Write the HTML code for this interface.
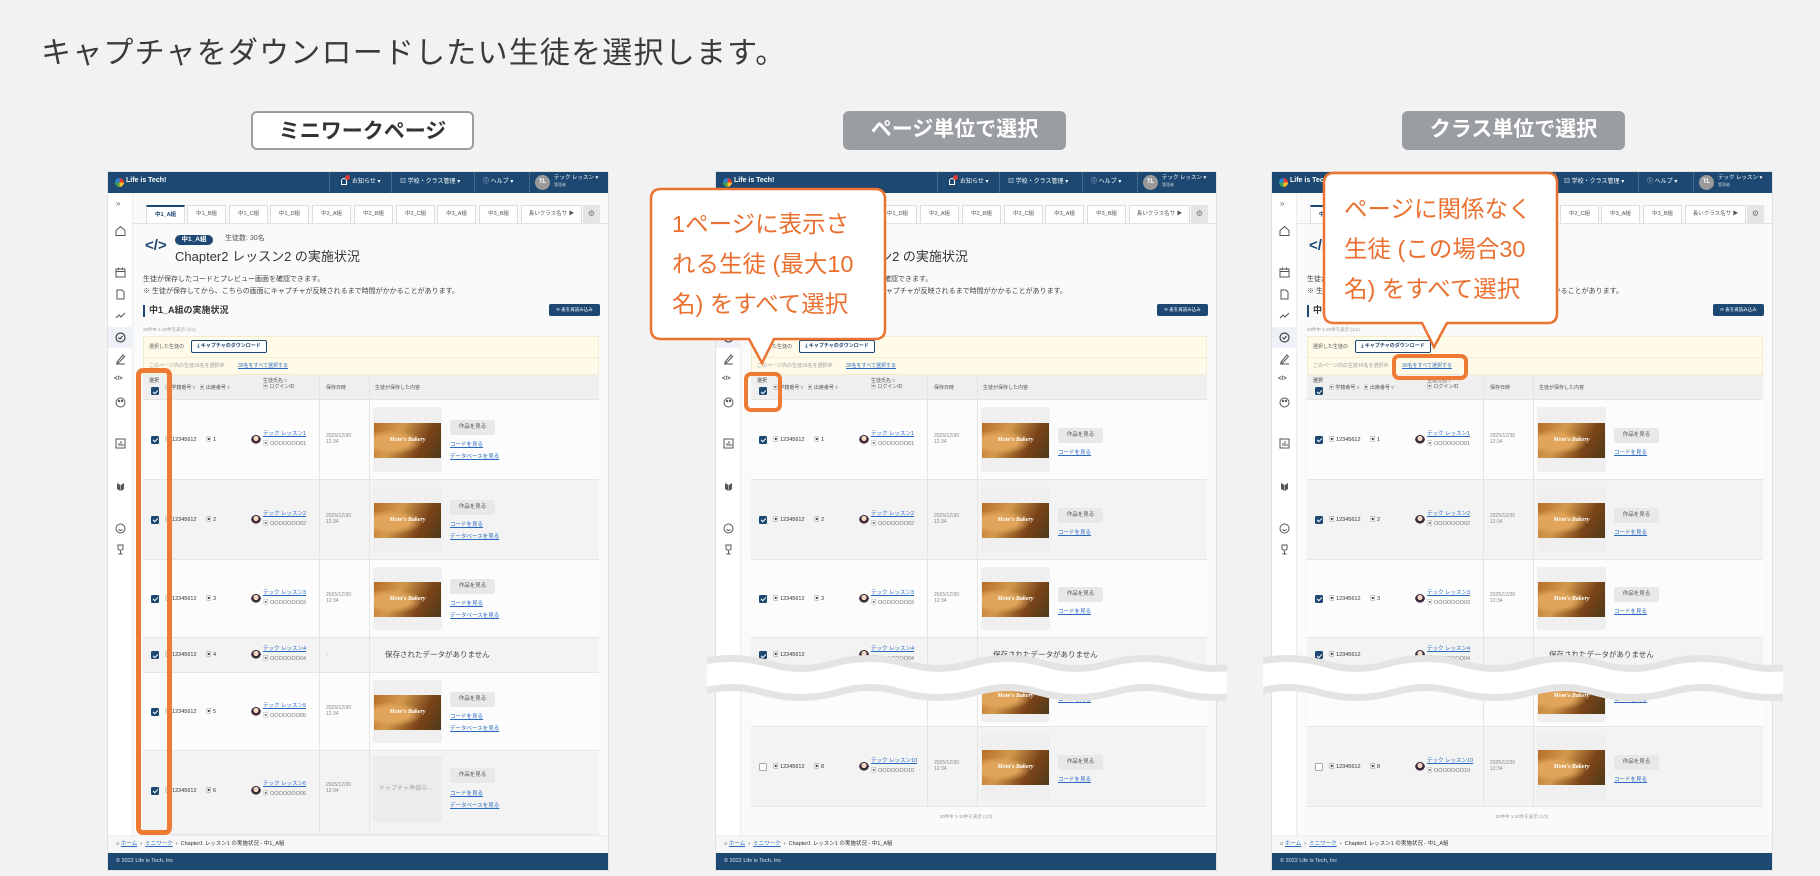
<!DOCTYPE html>
<html><head><meta charset="utf-8">
<style>
*{box-sizing:border-box}
body{margin:0;width:1820px;height:876px;background:#f2f2f2;position:relative;overflow:hidden;font-family:"Liberation Sans","Noto Sans CJK JP",sans-serif;color:#333}
.a{position:absolute}
.t{position:absolute;white-space:nowrap;line-height:1.2}
.p{position:absolute;top:172px;width:500px;height:698px;background:#fafafa;overflow:hidden;box-shadow:0 0 0 1px #e2e2e2}
.hdr{position:absolute;left:0;top:0;width:500px;height:21px;background:#1c4872;color:#fff;font-size:6px}
.hdr .dv{position:absolute;top:0;width:1px;height:21px;background:rgba(255,255,255,.18)}
.side{position:absolute;left:0;top:21px;width:25px;height:642px;background:#fff;border-right:1px solid #ececec}
.side svg{position:absolute;left:6px}
.tab{position:absolute;top:33px;width:39px;height:18px;background:#fff;border:1px solid #ddd;border-bottom:none;font-size:5.5px;color:#555;text-align:center;line-height:17px}
.tab.on{border-top:2px solid #1c4872;color:#1c4872;font-weight:bold}
.s5{font-size:5.5px}
.g{color:#777}
.lk{color:#2a6bc2;text-decoration:underline}
.row{position:absolute;left:35px;width:456px;border-bottom:1px solid #e6e6e6;overflow:hidden}
.cb{position:absolute;left:8px;top:50%;margin-top:-4px;width:8px;height:8px;border-radius:1.5px;border:1px solid #aaa;background:#fff}
.cb.on{background:#1c4872;border-color:#1c4872}
.cb.on:after{content:"";position:absolute;left:2px;top:0.5px;width:2px;height:4px;border:solid #fff;border-width:0 1px 1px 0;transform:rotate(45deg)}
.av{position:absolute;left:108px;top:50%;margin-top:-5px;width:10px;height:10px;border-radius:50%;background:radial-gradient(circle at 50% 35%,#f4d9c4 0 30%,#3a2a3a 32% 60%,#eee 62%)}
.c1{top:50%;margin-top:-3px}
.nm{top:50%;margin-top:-9px}
.lg{top:50%;margin-top:1px}
.dt{top:50%;margin-top:-7px;left:183px;font-size:5px;color:#888}
.th{position:absolute;left:230px;top:7px;bottom:7px;width:69px;background:#efefef;border-radius:3px}
.img{position:absolute;left:1px;right:1px;top:50%;margin-top:-17px;height:35px;background:radial-gradient(ellipse at 25% 55%,#e0a45a 0 25%,transparent 45%),linear-gradient(120deg,#b66d2a,#d39a4c 35%,#7a4418 70%,#4e3a1a);color:#fff;font-family:"Liberation Serif",serif;font-style:italic;font-weight:bold;font-size:6px;text-align:center;line-height:35px}
.btn{position:absolute;left:307px;top:50%;width:45px;height:15px;background:#e8e8e8;border-radius:2px;font-size:5.5px;color:#555;text-align:center;line-height:15px}
.b1{margin-top:-20px}.b2{margin-top:-12px}
.l1{top:50%;margin-top:2px;left:307px}.l2{top:50%;margin-top:14px;left:307px}
.l3{top:50%;margin-top:10px;left:307px}
.vl{position:absolute;width:1px;background:#e4e4e4}
.lab{position:absolute;top:111px;width:223px;height:39px;border-radius:6px;font-size:21px;font-weight:bold;text-align:center;line-height:38px}
.orange{position:absolute;border:5px solid #ef7a34;border-radius:7px}
.ct{position:absolute;color:#ea7030;font-size:23.5px;line-height:40px;white-space:nowrap}
.desc{font-size:7px;color:#444}
</style></head><body>

<div class="t" style="left:41px;top:36px;font-size:30px;color:#3a3a3a;letter-spacing:1.2px">キャプチャをダウンロードしたい生徒を選択します。</div>

<div class="lab" style="left:251px;background:#fff;border:2px solid #9a9da2;color:#333">ミニワークページ</div>
<div class="lab" style="left:843px;background:#9a9da2;color:#fff">ページ単位で選択</div>
<div class="lab" style="left:1402px;background:#9a9da2;color:#fff">クラス単位で選択</div>

<!-- ===================== PANEL 1 ===================== -->
<div class="p" style="left:108px">
 <div class="hdr">
  <div class="a" style="left:7px;top:6px;width:9px;height:9px;border-radius:50%;background:conic-gradient(#e53935 0 25%,#fbc02d 0 50%,#43a047 0 75%,#1e88e5 0)"></div>
  <div class="t" style="left:18px;top:5px;font-size:7px;font-weight:bold">Life is Tech!</div>
  <div class="dv" style="left:221px"></div><div class="dv" style="left:283px"></div><div class="dv" style="left:366px"></div><div class="dv" style="left:421px"></div>
  <div class="a" style="left:233px;top:6px;width:6px;height:7px;border:1px solid #fff;border-radius:3px 3px 0 0"></div>
  <div class="a" style="left:237px;top:3px;width:5px;height:5px;border-radius:50%;background:#e53935"></div>
  <div class="t" style="left:244px;top:7px">お知らせ ▾</div>
  <div class="t" style="left:292px;top:7px">▥ 学校・クラス管理 ▾</div>
  <div class="t" style="left:375px;top:7px">ⓘ ヘルプ ▾</div>
  <div class="a" style="left:427px;top:3px;width:15px;height:15px;border-radius:50%;background:#9a9a9a;font-size:6px;text-align:center;line-height:15px;font-weight:bold">TL</div>
  <div class="t" style="left:446px;top:3px;font-size:5.5px">テック レッスン ▾</div>
  <div class="t" style="left:446px;top:11px;font-size:4px;color:#bcc">管理者</div>
 </div>
 <div class="side">
  <div class="t" style="left:8px;top:6px;font-size:8px;color:#666">»</div>
  <div class="a" style="left:0;top:134px;width:25px;height:21px;background:#eef1f5"></div>
  <svg style="top:31px" width="13" height="13" viewBox="0 0 13 13" fill="none" stroke="#555" stroke-width="1"><path d="M2 6.5L6.5 2.5 11 6.5V11.5H2Z"/></svg>
  <svg style="top:73px" width="13" height="13" viewBox="0 0 13 13" fill="none" stroke="#555" stroke-width="1"><rect x="2" y="3" width="9" height="8"/><path d="M2 5.5H11M4.5 1.5V4M8.5 1.5V4"/></svg>
  <svg style="top:95px" width="13" height="13" viewBox="0 0 13 13" fill="none" stroke="#555" stroke-width="1"><path d="M3 2H8L10 4V11H3Z"/></svg>
  <svg style="top:116px" width="13" height="13" viewBox="0 0 13 13" fill="none" stroke="#555" stroke-width="1"><path d="M2 9L5 6 7 8 11 4"/></svg>
  <svg style="top:138px" width="13" height="13" viewBox="0 0 13 13" fill="none" stroke="#444" stroke-width="1.2"><circle cx="6.5" cy="6.5" r="4.5"/><path d="M4.5 6.5L6 8 8.5 5"/></svg>
  <svg style="top:159px" width="13" height="13" viewBox="0 0 13 13" fill="none" stroke="#555" stroke-width="1"><path d="M3 10L9 3 10.5 4.5 4.5 11H3ZM2 12H11"/></svg>
  <div class="t" style="left:6px;top:183px;font-size:6px;font-weight:bold;color:#444">&lt;/&gt;</div>
  <svg style="top:203px" width="13" height="13" viewBox="0 0 13 13" fill="none" stroke="#555" stroke-width="1"><circle cx="6.5" cy="6.5" r="4.5"/><circle cx="5" cy="5" r=".7"/><circle cx="8" cy="5" r=".7"/></svg>
  <svg style="top:244px" width="13" height="13" viewBox="0 0 13 13" fill="none" stroke="#555" stroke-width="1"><rect x="2" y="2" width="9" height="9"/><path d="M5 9V6M7 9V4M9 9V7"/></svg>
  <svg style="top:287px" width="13" height="13" viewBox="0 0 13 13" fill="#555"><path d="M3 3L6.5 5V11L3 9ZM10 3L7 5V11L10 9Z"/></svg>
  <svg style="top:329px" width="13" height="13" viewBox="0 0 13 13" fill="none" stroke="#555" stroke-width="1"><circle cx="6.5" cy="6.5" r="4.5"/><path d="M4.5 7.5Q6.5 9.5 8.5 7.5"/></svg>
  <svg style="top:350px" width="13" height="13" viewBox="0 0 13 13" fill="none" stroke="#555" stroke-width="1"><path d="M4 2H9V6Q6.5 8.5 4 6ZM6.5 8V10.5M4.5 11H8.5"/></svg>
 </div>
 <div class="a" style="left:25px;top:51px;width:475px;height:1px;background:#e4e4e4"></div>
 <div class="tab on" style="left:38px">中1_A組</div><div class="tab" style="left:79px">中1_B組</div><div class="tab" style="left:121px">中1_C組</div><div class="tab" style="left:162px">中1_D組</div><div class="tab" style="left:204px">中2_A組</div><div class="tab" style="left:246px">中2_B組</div><div class="tab" style="left:288px">中2_C組</div><div class="tab" style="left:329px">中3_A組</div><div class="tab" style="left:371px">中3_B組</div><div class="tab" style="left:413px;width:61px">長いクラス名サ ▶</div>
 <div class="a" style="left:475px;top:33px;width:17px;height:18px;background:#e5e5e5;font-size:8px;color:#777;text-align:center;line-height:18px">⚙</div>
 <div class="t" style="left:37px;top:65px;font-size:15px;font-weight:bold;color:#1c4872">&lt;/&gt;</div>
 <div class="a" style="left:67px;top:63px;width:38px;height:10px;border-radius:5px;background:#1c4872;color:#fff;font-size:6.5px;text-align:center;line-height:10px;font-weight:bold">中1_A組</div>
 <div class="t" style="left:117px;top:63px;font-size:7px;color:#555">生徒数: 30名</div>
 <div class="t" style="left:67px;top:77px;font-size:13px;color:#333">Chapter2 レッスン2 の実施状況</div>
 <div class="t desc" style="left:35px;top:104px">生徒が保存したコードとプレビュー画面を確認できます。</div>
 <div class="t desc" style="left:35px;top:116px">※ 生徒が保存してから、こちらの画面にキャプチャが反映されるまで時間がかかることがあります。</div>
 <div class="a" style="left:35px;top:133px;width:2px;height:12px;background:#1c4872"></div>
 <div class="t" style="left:41px;top:133px;font-size:9px;font-weight:bold">中1_A組の実施状況</div>
 <div class="a" style="left:441px;top:132px;width:51px;height:12px;background:#1c4872;border-radius:2px;color:#fff;font-size:4.5px;text-align:center;line-height:12px">⟳ 表を再読み込み</div>
 <div class="t" style="left:35px;top:155px;font-size:4.5px;color:#999">20件中 1-20件を表示 (1/1)</div>
 <div class="a" style="left:35px;top:164px;width:456px;height:39px;background:#fffbe8;border:1px solid #f2ecd2"></div>
 <div class="a" style="left:35px;top:185px;width:456px;height:1px;background:#f2ecd2"></div>
 <div class="t" style="left:41px;top:172px;font-size:5px;color:#555">選択した生徒の</div>
 <div class="a" style="left:83px;top:168px;width:76px;height:13px;background:#fff;border:1px solid #1c4872;border-radius:2px;font-size:5px;font-weight:bold;color:#1c4872;text-align:center;line-height:11px">⤓ キャプチャのダウンロード</div>
 <div class="t" style="left:41px;top:191px;font-size:5px;color:#999">このページ内の生徒10名を選択中</div>
 <div class="t lk" style="left:130px;top:191px;font-size:5px">30名をすべて選択する</div>
 <div class="a" style="left:35px;top:203px;width:456px;height:25px;background:#efefef;border-bottom:1px solid #e4e4e4"></div>
 <div class="t" style="left:41px;top:206px;font-size:5px">選択</div>
 <i class="cb on" style="left:43px;top:215px;margin:0"></i>
 <div class="t" style="left:57px;top:213px;font-size:5px;color:#555">▣ 学籍番号 ▿ &nbsp;&nbsp;▣ 出席番号 ▿</div>
 <div class="t" style="left:155px;top:206px;font-size:5px;color:#555">生徒氏名 ▿<br>▣ ログインID</div>
 <div class="t" style="left:218px;top:213px;font-size:5px;color:#555">保存日時</div>
 <div class="t" style="left:267px;top:213px;font-size:5px;color:#555">生徒が保存した内容</div>

 <div class="row" style="top:228px;height:80px;background:#fcfcfc"><i class="cb on"></i><span class="t s5 c1" style="left:22px">▣ 12345612</span><span class="t s5 c1" style="left:63px">▣ 1</span><i class="av"></i><span class="t s5 lk nm" style="left:120px">テック レッスン1</span><span class="t s5 g lg" style="left:120px">▣ OOOOOOO01</span><span class="t dt">2025/12/30<br>12:34</span><div class="th"><div class="img">Mom's Bakery</div></div><span class="btn b1">作品を見る</span><span class="t s5 lk l1">コードを見る</span><span class="t s5 lk l2">データベースを見る</span></div>
 <div class="row" style="top:308px;height:80px;background:#f3f3f3"><i class="cb on"></i><span class="t s5 c1" style="left:22px">▣ 12345612</span><span class="t s5 c1" style="left:63px">▣ 2</span><i class="av"></i><span class="t s5 lk nm" style="left:120px">テック レッスン2</span><span class="t s5 g lg" style="left:120px">▣ OOOOOOO02</span><span class="t dt">2025/12/30<br>12:34</span><div class="th"><div class="img">Mom's Bakery</div></div><span class="btn b1">作品を見る</span><span class="t s5 lk l1">コードを見る</span><span class="t s5 lk l2">データベースを見る</span></div>
 <div class="row" style="top:388px;height:78px;background:#fcfcfc"><i class="cb on"></i><span class="t s5 c1" style="left:22px">▣ 12345612</span><span class="t s5 c1" style="left:63px">▣ 3</span><i class="av"></i><span class="t s5 lk nm" style="left:120px">テック レッスン3</span><span class="t s5 g lg" style="left:120px">▣ OOOOOOO03</span><span class="t dt">2025/12/30<br>12:34</span><div class="th"><div class="img">Mom's Bakery</div></div><span class="btn b1">作品を見る</span><span class="t s5 lk l1">コードを見る</span><span class="t s5 lk l2">データベースを見る</span></div>
 <div class="row" style="top:466px;height:35px;background:#f3f3f3"><i class="cb on"></i><span class="t s5 c1" style="left:22px">▣ 12345612</span><span class="t s5 c1" style="left:63px">▣ 4</span><i class="av"></i><span class="t s5 lk nm" style="left:120px">テック レッスン4</span><span class="t s5 g lg" style="left:120px">▣ OOOOOOO04</span><span class="t s5 g c1" style="left:183px">-</span><span class="t c1" style="left:242px;font-size:7.5px;margin-top:-5px;color:#444">保存されたデータがありません</span></div>
 <div class="row" style="top:501px;height:78px;background:#fcfcfc"><i class="cb on"></i><span class="t s5 c1" style="left:22px">▣ 12345612</span><span class="t s5 c1" style="left:63px">▣ 5</span><i class="av"></i><span class="t s5 lk nm" style="left:120px">テック レッスン5</span><span class="t s5 g lg" style="left:120px">▣ OOOOOOO05</span><span class="t dt">2025/12/30<br>12:34</span><div class="th"><div class="img">Mom's Bakery</div></div><span class="btn b1">作品を見る</span><span class="t s5 lk l1">コードを見る</span><span class="t s5 lk l2">データベースを見る</span></div>
 <div class="row" style="top:579px;height:84px;background:#f3f3f3"><i class="cb on" style="margin-top:-6px"></i><span class="t s5" style="left:22px;top:37px">▣ 12345612</span><span class="t s5" style="left:63px;top:37px">▣ 6</span><i class="av" style="margin-top:-7px"></i><span class="t s5 lk" style="left:120px;top:30px">テック レッスン6</span><span class="t s5 g" style="left:120px;top:40px">▣ OOOOOOO06</span><span class="t" style="left:183px;top:31px;font-size:5px;color:#888">2025/12/30<br>12:34</span><div class="th" style="top:5px;bottom:12px;background:#ececec"><span class="t" style="left:6px;top:30px;font-size:6px;color:#aaa">キャプチャ準備中...</span></div><span class="btn" style="top:17px">作品を見る</span><span class="t s5 lk" style="left:307px;top:40px">コードを見る</span><span class="t s5 lk" style="left:307px;top:52px">データベースを見る</span></div>
 <div class="vl" style="left:211px;top:203px;height:460px"></div>
 <div class="vl" style="left:261px;top:203px;height:460px"></div>
 <div class="a" style="left:0;top:663px;width:500px;height:18px;background:#f7f7f7;border-top:1px solid #eee"></div>
 <div class="t" style="left:8px;top:669px;font-size:5.5px;color:#333">⌂ <span class="lk">ホーム</span> &nbsp;›&nbsp; <span class="lk">ミニワーク</span> &nbsp;›&nbsp; Chapter1 レッスン1 の実施状況 - 中1_A組</div>
 <div class="a" style="left:0;top:681px;width:500px;height:17px;background:#1c4872"></div>
 <div class="t" style="left:8px;top:686px;font-size:5.5px;color:#dfe6ee">© 2022 Life is Tech, Inc</div>
</div>

<!-- ===================== PANEL 2 ===================== -->
<div class="p" style="left:716px">
 <div class="hdr">
  <div class="a" style="left:7px;top:6px;width:9px;height:9px;border-radius:50%;background:conic-gradient(#e53935 0 25%,#fbc02d 0 50%,#43a047 0 75%,#1e88e5 0)"></div>
  <div class="t" style="left:18px;top:5px;font-size:7px;font-weight:bold">Life is Tech!</div>
  <div class="dv" style="left:221px"></div><div class="dv" style="left:283px"></div><div class="dv" style="left:366px"></div><div class="dv" style="left:421px"></div>
  <div class="a" style="left:233px;top:6px;width:6px;height:7px;border:1px solid #fff;border-radius:3px 3px 0 0"></div>
  <div class="a" style="left:237px;top:3px;width:5px;height:5px;border-radius:50%;background:#e53935"></div>
  <div class="t" style="left:244px;top:7px">お知らせ ▾</div>
  <div class="t" style="left:292px;top:7px">▥ 学校・クラス管理 ▾</div>
  <div class="t" style="left:375px;top:7px">ⓘ ヘルプ ▾</div>
  <div class="a" style="left:427px;top:3px;width:15px;height:15px;border-radius:50%;background:#9a9a9a;font-size:6px;text-align:center;line-height:15px;font-weight:bold">TL</div>
  <div class="t" style="left:446px;top:3px;font-size:5.5px">テック レッスン ▾</div>
  <div class="t" style="left:446px;top:11px;font-size:4px;color:#bcc">管理者</div>
 </div>
 <div class="side">
  <div class="t" style="left:8px;top:6px;font-size:8px;color:#666">»</div>
  <div class="a" style="left:0;top:134px;width:25px;height:21px;background:#eef1f5"></div>
  <svg style="top:31px" width="13" height="13" viewBox="0 0 13 13" fill="none" stroke="#555" stroke-width="1"><path d="M2 6.5L6.5 2.5 11 6.5V11.5H2Z"/></svg>
  <svg style="top:73px" width="13" height="13" viewBox="0 0 13 13" fill="none" stroke="#555" stroke-width="1"><rect x="2" y="3" width="9" height="8"/><path d="M2 5.5H11M4.5 1.5V4M8.5 1.5V4"/></svg>
  <svg style="top:95px" width="13" height="13" viewBox="0 0 13 13" fill="none" stroke="#555" stroke-width="1"><path d="M3 2H8L10 4V11H3Z"/></svg>
  <svg style="top:116px" width="13" height="13" viewBox="0 0 13 13" fill="none" stroke="#555" stroke-width="1"><path d="M2 9L5 6 7 8 11 4"/></svg>
  <svg style="top:138px" width="13" height="13" viewBox="0 0 13 13" fill="none" stroke="#444" stroke-width="1.2"><circle cx="6.5" cy="6.5" r="4.5"/><path d="M4.5 6.5L6 8 8.5 5"/></svg>
  <svg style="top:159px" width="13" height="13" viewBox="0 0 13 13" fill="none" stroke="#555" stroke-width="1"><path d="M3 10L9 3 10.5 4.5 4.5 11H3ZM2 12H11"/></svg>
  <div class="t" style="left:6px;top:183px;font-size:6px;font-weight:bold;color:#444">&lt;/&gt;</div>
  <svg style="top:203px" width="13" height="13" viewBox="0 0 13 13" fill="none" stroke="#555" stroke-width="1"><circle cx="6.5" cy="6.5" r="4.5"/><circle cx="5" cy="5" r=".7"/><circle cx="8" cy="5" r=".7"/></svg>
  <svg style="top:244px" width="13" height="13" viewBox="0 0 13 13" fill="none" stroke="#555" stroke-width="1"><rect x="2" y="2" width="9" height="9"/><path d="M5 9V6M7 9V4M9 9V7"/></svg>
  <svg style="top:287px" width="13" height="13" viewBox="0 0 13 13" fill="#555"><path d="M3 3L6.5 5V11L3 9ZM10 3L7 5V11L10 9Z"/></svg>
  <svg style="top:329px" width="13" height="13" viewBox="0 0 13 13" fill="none" stroke="#555" stroke-width="1"><circle cx="6.5" cy="6.5" r="4.5"/><path d="M4.5 7.5Q6.5 9.5 8.5 7.5"/></svg>
  <svg style="top:350px" width="13" height="13" viewBox="0 0 13 13" fill="none" stroke="#555" stroke-width="1"><path d="M4 2H9V6Q6.5 8.5 4 6ZM6.5 8V10.5M4.5 11H8.5"/></svg>
 </div>
 <div class="a" style="left:25px;top:51px;width:475px;height:1px;background:#e4e4e4"></div>
 <div class="tab on" style="left:38px">中1_A組</div><div class="tab" style="left:79px">中1_B組</div><div class="tab" style="left:121px">中1_C組</div><div class="tab" style="left:162px">中1_D組</div><div class="tab" style="left:204px">中2_A組</div><div class="tab" style="left:246px">中2_B組</div><div class="tab" style="left:288px">中2_C組</div><div class="tab" style="left:329px">中3_A組</div><div class="tab" style="left:371px">中3_B組</div><div class="tab" style="left:413px;width:61px">長いクラス名サ ▶</div>
 <div class="a" style="left:475px;top:33px;width:17px;height:18px;background:#e5e5e5;font-size:8px;color:#777;text-align:center;line-height:18px">⚙</div>
 <div class="t" style="left:37px;top:65px;font-size:15px;font-weight:bold;color:#1c4872">&lt;/&gt;</div>
 <div class="a" style="left:67px;top:63px;width:38px;height:10px;border-radius:5px;background:#1c4872;color:#fff;font-size:6.5px;text-align:center;line-height:10px;font-weight:bold">中1_A組</div>
 <div class="t" style="left:117px;top:63px;font-size:7px;color:#555">生徒数: 30名</div>
 <div class="t" style="left:67px;top:77px;font-size:13px;color:#333">Chapter2 レッスン2 の実施状況</div>
 <div class="t desc" style="left:35px;top:104px">生徒が保存したコードとプレビュー画面を確認できます。</div>
 <div class="t desc" style="left:35px;top:116px">※ 生徒が保存してから、こちらの画面にキャプチャが反映されるまで時間がかかることがあります。</div>
 <div class="a" style="left:35px;top:133px;width:2px;height:12px;background:#1c4872"></div>
 <div class="t" style="left:41px;top:133px;font-size:9px;font-weight:bold">中1_A組の実施状況</div>
 <div class="a" style="left:441px;top:132px;width:51px;height:12px;background:#1c4872;border-radius:2px;color:#fff;font-size:4.5px;text-align:center;line-height:12px">⟳ 表を再読み込み</div>
 <div class="t" style="left:35px;top:155px;font-size:4.5px;color:#999">20件中 1-20件を表示 (1/1)</div>
 <div class="a" style="left:35px;top:164px;width:456px;height:39px;background:#fffbe8;border:1px solid #f2ecd2"></div>
 <div class="a" style="left:35px;top:185px;width:456px;height:1px;background:#f2ecd2"></div>
 <div class="t" style="left:41px;top:172px;font-size:5px;color:#555">選択した生徒の</div>
 <div class="a" style="left:83px;top:168px;width:76px;height:13px;background:#fff;border:1px solid #1c4872;border-radius:2px;font-size:5px;font-weight:bold;color:#1c4872;text-align:center;line-height:11px">⤓ キャプチャのダウンロード</div>
 <div class="t" style="left:41px;top:191px;font-size:5px;color:#999">このページ内の生徒10名を選択中</div>
 <div class="t lk" style="left:130px;top:191px;font-size:5px">30名をすべて選択する</div>
 <div class="a" style="left:35px;top:203px;width:456px;height:25px;background:#efefef;border-bottom:1px solid #e4e4e4"></div>
 <div class="t" style="left:41px;top:206px;font-size:5px">選択</div>
 <i class="cb on" style="left:43px;top:215px;margin:0"></i>
 <div class="t" style="left:57px;top:213px;font-size:5px;color:#555">▣ 学籍番号 ▿ &nbsp;&nbsp;▣ 出席番号 ▿</div>
 <div class="t" style="left:155px;top:206px;font-size:5px;color:#555">生徒氏名 ▿<br>▣ ログインID</div>
 <div class="t" style="left:218px;top:213px;font-size:5px;color:#555">保存日時</div>
 <div class="t" style="left:267px;top:213px;font-size:5px;color:#555">生徒が保存した内容</div>

 <div class="row" style="top:228px;height:80px;background:#fcfcfc"><i class="cb on"></i><span class="t s5 c1" style="left:22px">▣ 12345612</span><span class="t s5 c1" style="left:63px">▣ 1</span><i class="av"></i><span class="t s5 lk nm" style="left:120px">テック レッスン1</span><span class="t s5 g lg" style="left:120px">▣ OOOOOOO01</span><span class="t dt">2025/12/30<br>12:34</span><div class="th"><div class="img">Mom's Bakery</div></div><span class="btn b2">作品を見る</span><span class="t s5 lk l3">コードを見る</span></div>
 <div class="row" style="top:308px;height:80px;background:#f3f3f3"><i class="cb on"></i><span class="t s5 c1" style="left:22px">▣ 12345612</span><span class="t s5 c1" style="left:63px">▣ 2</span><i class="av"></i><span class="t s5 lk nm" style="left:120px">テック レッスン2</span><span class="t s5 g lg" style="left:120px">▣ OOOOOOO02</span><span class="t dt">2025/12/30<br>12:34</span><div class="th"><div class="img">Mom's Bakery</div></div><span class="btn b2">作品を見る</span><span class="t s5 lk l3">コードを見る</span></div>
 <div class="row" style="top:388px;height:78px;background:#fcfcfc"><i class="cb on"></i><span class="t s5 c1" style="left:22px">▣ 12345612</span><span class="t s5 c1" style="left:63px">▣ 3</span><i class="av"></i><span class="t s5 lk nm" style="left:120px">テック レッスン3</span><span class="t s5 g lg" style="left:120px">▣ OOOOOOO03</span><span class="t dt">2025/12/30<br>12:34</span><div class="th"><div class="img">Mom's Bakery</div></div><span class="btn b2">作品を見る</span><span class="t s5 lk l3">コードを見る</span></div>
 <div class="row" style="top:466px;height:35px;background:#f3f3f3"><i class="cb on"></i><span class="t s5 c1" style="left:22px">▣ 12345612</span><i class="av"></i><span class="t s5 lk nm" style="left:120px">テック レッスン4</span><span class="t s5 g lg" style="left:120px">▣ OOOOOOO04</span><span class="t c1" style="left:242px;font-size:7.5px;margin-top:-5px;color:#444">保存されたデータがありません</span></div>
 <div class="row" style="top:501px;height:54px;background:#fcfcfc"><span class="t" style="left:183px;top:15px;font-size:5px;color:#888">12:34</span><div class="th" style="top:-20px;bottom:4px"><div class="img" style="top:auto;bottom:8px;margin:0">Mom's Bakery</div></div><span class="t s5 lk" style="left:307px;top:24px">コードを見る</span></div>
 <div class="row" style="top:555px;height:80px;background:#f3f3f3;border-radius:0 0 3px 3px"><i class="cb"></i><span class="t s5 c1" style="left:22px">▣ 12345612</span><span class="t s5 c1" style="left:63px">▣ 8</span><i class="av"></i><span class="t s5 lk nm" style="left:120px">テック レッスン10</span><span class="t s5 g lg" style="left:120px">▣ OOOOOOO10</span><span class="t dt">2025/12/30<br>12:34</span><div class="th"><div class="img">Mom's Bakery</div></div><span class="btn b2">作品を見る</span><span class="t s5 lk l3">コードを見る</span></div>
 <div class="vl" style="left:211px;top:203px;height:432px"></div>
 <div class="vl" style="left:261px;top:203px;height:432px"></div>
 <div class="t" style="left:0;width:500px;text-align:center;top:642px;font-size:4.5px;color:#999">30件中 1-10件を表示 (1/3)</div>
 <div class="a" style="left:0;top:663px;width:500px;height:18px;background:#f7f7f7;border-top:1px solid #eee"></div>
 <div class="t" style="left:8px;top:669px;font-size:5.5px;color:#333">⌂ <span class="lk">ホーム</span> &nbsp;›&nbsp; <span class="lk">ミニワーク</span> &nbsp;›&nbsp; Chapter1 レッスン1 の実施状況 - 中1_A組</div>
 <div class="a" style="left:0;top:681px;width:500px;height:17px;background:#1c4872"></div>
 <div class="t" style="left:8px;top:686px;font-size:5.5px;color:#dfe6ee">© 2022 Life is Tech, Inc</div>
</div>

<!-- ===================== PANEL 3 ===================== -->
<div class="p" style="left:1272px">
 <div class="hdr">
  <div class="a" style="left:7px;top:6px;width:9px;height:9px;border-radius:50%;background:conic-gradient(#e53935 0 25%,#fbc02d 0 50%,#43a047 0 75%,#1e88e5 0)"></div>
  <div class="t" style="left:18px;top:5px;font-size:7px;font-weight:bold">Life is Tech!</div>
  <div class="dv" style="left:221px"></div><div class="dv" style="left:283px"></div><div class="dv" style="left:366px"></div><div class="dv" style="left:421px"></div>
  <div class="a" style="left:233px;top:6px;width:6px;height:7px;border:1px solid #fff;border-radius:3px 3px 0 0"></div>
  <div class="a" style="left:237px;top:3px;width:5px;height:5px;border-radius:50%;background:#e53935"></div>
  <div class="t" style="left:244px;top:7px">お知らせ ▾</div>
  <div class="t" style="left:292px;top:7px">▥ 学校・クラス管理 ▾</div>
  <div class="t" style="left:375px;top:7px">ⓘ ヘルプ ▾</div>
  <div class="a" style="left:427px;top:3px;width:15px;height:15px;border-radius:50%;background:#9a9a9a;font-size:6px;text-align:center;line-height:15px;font-weight:bold">TL</div>
  <div class="t" style="left:446px;top:3px;font-size:5.5px">テック レッスン ▾</div>
  <div class="t" style="left:446px;top:11px;font-size:4px;color:#bcc">管理者</div>
 </div>
 <div class="side">
  <div class="t" style="left:8px;top:6px;font-size:8px;color:#666">»</div>
  <div class="a" style="left:0;top:134px;width:25px;height:21px;background:#eef1f5"></div>
  <svg style="top:31px" width="13" height="13" viewBox="0 0 13 13" fill="none" stroke="#555" stroke-width="1"><path d="M2 6.5L6.5 2.5 11 6.5V11.5H2Z"/></svg>
  <svg style="top:73px" width="13" height="13" viewBox="0 0 13 13" fill="none" stroke="#555" stroke-width="1"><rect x="2" y="3" width="9" height="8"/><path d="M2 5.5H11M4.5 1.5V4M8.5 1.5V4"/></svg>
  <svg style="top:95px" width="13" height="13" viewBox="0 0 13 13" fill="none" stroke="#555" stroke-width="1"><path d="M3 2H8L10 4V11H3Z"/></svg>
  <svg style="top:116px" width="13" height="13" viewBox="0 0 13 13" fill="none" stroke="#555" stroke-width="1"><path d="M2 9L5 6 7 8 11 4"/></svg>
  <svg style="top:138px" width="13" height="13" viewBox="0 0 13 13" fill="none" stroke="#444" stroke-width="1.2"><circle cx="6.5" cy="6.5" r="4.5"/><path d="M4.5 6.5L6 8 8.5 5"/></svg>
  <svg style="top:159px" width="13" height="13" viewBox="0 0 13 13" fill="none" stroke="#555" stroke-width="1"><path d="M3 10L9 3 10.5 4.5 4.5 11H3ZM2 12H11"/></svg>
  <div class="t" style="left:6px;top:183px;font-size:6px;font-weight:bold;color:#444">&lt;/&gt;</div>
  <svg style="top:203px" width="13" height="13" viewBox="0 0 13 13" fill="none" stroke="#555" stroke-width="1"><circle cx="6.5" cy="6.5" r="4.5"/><circle cx="5" cy="5" r=".7"/><circle cx="8" cy="5" r=".7"/></svg>
  <svg style="top:244px" width="13" height="13" viewBox="0 0 13 13" fill="none" stroke="#555" stroke-width="1"><rect x="2" y="2" width="9" height="9"/><path d="M5 9V6M7 9V4M9 9V7"/></svg>
  <svg style="top:287px" width="13" height="13" viewBox="0 0 13 13" fill="#555"><path d="M3 3L6.5 5V11L3 9ZM10 3L7 5V11L10 9Z"/></svg>
  <svg style="top:329px" width="13" height="13" viewBox="0 0 13 13" fill="none" stroke="#555" stroke-width="1"><circle cx="6.5" cy="6.5" r="4.5"/><path d="M4.5 7.5Q6.5 9.5 8.5 7.5"/></svg>
  <svg style="top:350px" width="13" height="13" viewBox="0 0 13 13" fill="none" stroke="#555" stroke-width="1"><path d="M4 2H9V6Q6.5 8.5 4 6ZM6.5 8V10.5M4.5 11H8.5"/></svg>
 </div>
 <div class="a" style="left:25px;top:51px;width:475px;height:1px;background:#e4e4e4"></div>
 <div class="tab on" style="left:38px">中1_A組</div><div class="tab" style="left:79px">中1_B組</div><div class="tab" style="left:121px">中1_C組</div><div class="tab" style="left:162px">中1_D組</div><div class="tab" style="left:204px">中2_A組</div><div class="tab" style="left:246px">中2_B組</div><div class="tab" style="left:288px">中2_C組</div><div class="tab" style="left:329px">中3_A組</div><div class="tab" style="left:371px">中3_B組</div><div class="tab" style="left:413px;width:61px">長いクラス名サ ▶</div>
 <div class="a" style="left:475px;top:33px;width:17px;height:18px;background:#e5e5e5;font-size:8px;color:#777;text-align:center;line-height:18px">⚙</div>
 <div class="t" style="left:37px;top:65px;font-size:15px;font-weight:bold;color:#1c4872">&lt;/&gt;</div>
 <div class="a" style="left:67px;top:63px;width:38px;height:10px;border-radius:5px;background:#1c4872;color:#fff;font-size:6.5px;text-align:center;line-height:10px;font-weight:bold">中1_A組</div>
 <div class="t" style="left:117px;top:63px;font-size:7px;color:#555">生徒数: 30名</div>
 <div class="t" style="left:67px;top:77px;font-size:13px;color:#333">Chapter2 レッスン2 の実施状況</div>
 <div class="t desc" style="left:35px;top:104px">生徒が保存したコードとプレビュー画面を確認できます。</div>
 <div class="t desc" style="left:35px;top:116px">※ 生徒が保存してから、こちらの画面にキャプチャが反映されるまで時間がかかることがあります。</div>
 <div class="a" style="left:35px;top:133px;width:2px;height:12px;background:#1c4872"></div>
 <div class="t" style="left:41px;top:133px;font-size:9px;font-weight:bold">中1_A組の実施状況</div>
 <div class="a" style="left:441px;top:132px;width:51px;height:12px;background:#1c4872;border-radius:2px;color:#fff;font-size:4.5px;text-align:center;line-height:12px">⟳ 表を再読み込み</div>
 <div class="t" style="left:35px;top:155px;font-size:4.5px;color:#999">20件中 1-20件を表示 (1/1)</div>
 <div class="a" style="left:35px;top:164px;width:456px;height:39px;background:#fffbe8;border:1px solid #f2ecd2"></div>
 <div class="a" style="left:35px;top:185px;width:456px;height:1px;background:#f2ecd2"></div>
 <div class="t" style="left:41px;top:172px;font-size:5px;color:#555">選択した生徒の</div>
 <div class="a" style="left:83px;top:168px;width:76px;height:13px;background:#fff;border:1px solid #1c4872;border-radius:2px;font-size:5px;font-weight:bold;color:#1c4872;text-align:center;line-height:11px">⤓ キャプチャのダウンロード</div>
 <div class="t" style="left:41px;top:191px;font-size:5px;color:#999">このページ内の生徒10名を選択中</div>
 <div class="t lk" style="left:130px;top:191px;font-size:5px">30名をすべて選択する</div>
 <div class="a" style="left:35px;top:203px;width:456px;height:25px;background:#efefef;border-bottom:1px solid #e4e4e4"></div>
 <div class="t" style="left:41px;top:206px;font-size:5px">選択</div>
 <i class="cb on" style="left:43px;top:215px;margin:0"></i>
 <div class="t" style="left:57px;top:213px;font-size:5px;color:#555">▣ 学籍番号 ▿ &nbsp;&nbsp;▣ 出席番号 ▿</div>
 <div class="t" style="left:155px;top:206px;font-size:5px;color:#555">生徒氏名 ▿<br>▣ ログインID</div>
 <div class="t" style="left:218px;top:213px;font-size:5px;color:#555">保存日時</div>
 <div class="t" style="left:267px;top:213px;font-size:5px;color:#555">生徒が保存した内容</div>

 <div class="row" style="top:228px;height:80px;background:#fcfcfc"><i class="cb on"></i><span class="t s5 c1" style="left:22px">▣ 12345612</span><span class="t s5 c1" style="left:63px">▣ 1</span><i class="av"></i><span class="t s5 lk nm" style="left:120px">テック レッスン1</span><span class="t s5 g lg" style="left:120px">▣ OOOOOOO01</span><span class="t dt">2025/12/30<br>12:34</span><div class="th"><div class="img">Mom's Bakery</div></div><span class="btn b2">作品を見る</span><span class="t s5 lk l3">コードを見る</span></div>
 <div class="row" style="top:308px;height:80px;background:#f3f3f3"><i class="cb on"></i><span class="t s5 c1" style="left:22px">▣ 12345612</span><span class="t s5 c1" style="left:63px">▣ 2</span><i class="av"></i><span class="t s5 lk nm" style="left:120px">テック レッスン2</span><span class="t s5 g lg" style="left:120px">▣ OOOOOOO02</span><span class="t dt">2025/12/30<br>12:34</span><div class="th"><div class="img">Mom's Bakery</div></div><span class="btn b2">作品を見る</span><span class="t s5 lk l3">コードを見る</span></div>
 <div class="row" style="top:388px;height:78px;background:#fcfcfc"><i class="cb on"></i><span class="t s5 c1" style="left:22px">▣ 12345612</span><span class="t s5 c1" style="left:63px">▣ 3</span><i class="av"></i><span class="t s5 lk nm" style="left:120px">テック レッスン3</span><span class="t s5 g lg" style="left:120px">▣ OOOOOOO03</span><span class="t dt">2025/12/30<br>12:34</span><div class="th"><div class="img">Mom's Bakery</div></div><span class="btn b2">作品を見る</span><span class="t s5 lk l3">コードを見る</span></div>
 <div class="row" style="top:466px;height:35px;background:#f3f3f3"><i class="cb on"></i><span class="t s5 c1" style="left:22px">▣ 12345612</span><i class="av"></i><span class="t s5 lk nm" style="left:120px">テック レッスン4</span><span class="t s5 g lg" style="left:120px">▣ OOOOOOO04</span><span class="t c1" style="left:242px;font-size:7.5px;margin-top:-5px;color:#444">保存されたデータがありません</span></div>
 <div class="row" style="top:501px;height:54px;background:#fcfcfc"><span class="t" style="left:183px;top:15px;font-size:5px;color:#888">12:34</span><div class="th" style="top:-20px;bottom:4px"><div class="img" style="top:auto;bottom:8px;margin:0">Mom's Bakery</div></div><span class="t s5 lk" style="left:307px;top:24px">コードを見る</span></div>
 <div class="row" style="top:555px;height:80px;background:#f3f3f3"><i class="cb"></i><span class="t s5 c1" style="left:22px">▣ 12345612</span><span class="t s5 c1" style="left:63px">▣ 8</span><i class="av"></i><span class="t s5 lk nm" style="left:120px">テック レッスン10</span><span class="t s5 g lg" style="left:120px">▣ OOOOOOO10</span><span class="t dt">2025/12/30<br>12:34</span><div class="th"><div class="img">Mom's Bakery</div></div><span class="btn b2">作品を見る</span><span class="t s5 lk l3">コードを見る</span></div>
 <div class="vl" style="left:211px;top:203px;height:432px"></div>
 <div class="vl" style="left:261px;top:203px;height:432px"></div>
 <div class="t" style="left:0;width:500px;text-align:center;top:642px;font-size:4.5px;color:#999">30件中 1-10件を表示 (1/3)</div>
 <div class="a" style="left:0;top:663px;width:500px;height:18px;background:#f7f7f7;border-top:1px solid #eee"></div>
 <div class="t" style="left:8px;top:669px;font-size:5.5px;color:#333">⌂ <span class="lk">ホーム</span> &nbsp;›&nbsp; <span class="lk">ミニワーク</span> &nbsp;›&nbsp; Chapter1 レッスン1 の実施状況 - 中1_A組</div>
 <div class="a" style="left:0;top:681px;width:500px;height:17px;background:#1c4872"></div>
 <div class="t" style="left:8px;top:686px;font-size:5.5px;color:#dfe6ee">© 2022 Life is Tech, Inc</div>
</div>

<!-- waves -->
<svg class="a" style="left:707px;top:648px" width="520" height="60" viewBox="0 0 520 60">
 <path d="M-10 30 Q24.5 20 59 30 T128 30 T197 30 T266 30 T335 30 T404 30 T473 30 T542 30" fill="none" stroke="#e4e4e4" stroke-width="36"/>
 <path d="M-10 30 Q24.5 20 59 30 T128 30 T197 30 T266 30 T335 30 T404 30 T473 30 T542 30" fill="none" stroke="#fff" stroke-width="22"/>
</svg>
<svg class="a" style="left:1263px;top:648px" width="520" height="60" viewBox="0 0 520 60">
 <path d="M-10 30 Q24.5 20 59 30 T128 30 T197 30 T266 30 T335 30 T404 30 T473 30 T542 30" fill="none" stroke="#e4e4e4" stroke-width="36"/>
 <path d="M-10 30 Q24.5 20 59 30 T128 30 T197 30 T266 30 T335 30 T404 30 T473 30 T542 30" fill="none" stroke="#fff" stroke-width="22"/>
</svg>

<!-- orange highlights -->
<div class="orange" style="left:136px;top:368px;width:36px;height:467px"></div>
<div class="orange" style="left:744px;top:372px;width:38px;height:40px;border-width:4px"></div>
<div class="orange" style="left:1392px;top:354px;width:76px;height:26px;border-width:4px"></div>

<!-- callouts -->
<svg class="a" style="left:645px;top:184px" width="250" height="185" viewBox="0 0 250 185">
 <path d="M16 5H230Q240 5 240 15V145Q240 155 230 155H129L117 179 104 155H16Q6 155 6 145V15Q6 5 16 5Z" fill="#fff" stroke="#ec7332" stroke-width="2.5"/>
</svg>
<div class="ct" style="left:672px;top:204px">1ページに表示さ<br>れる生徒 (最大10<br>名) をすべて選択</div>

<svg class="a" style="left:1318px;top:168px" width="246" height="185" viewBox="0 0 246 185">
 <path d="M16 5H230Q239 5 239 15V145Q239 155 230 155H129L116 179 104 155H16Q6 155 6 145V15Q6 5 16 5Z" fill="#fff" stroke="#ec7332" stroke-width="2.5"/>
</svg>
<div class="ct" style="left:1344px;top:189px">ページに関係なく<br>生徒 (この場合30<br>名) をすべて選択</div>

</body></html>
